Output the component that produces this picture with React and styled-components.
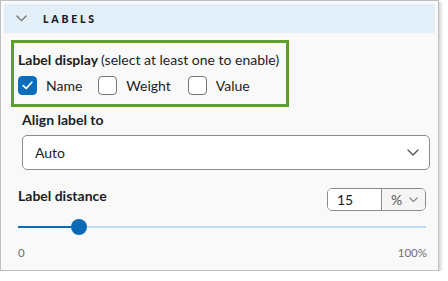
import React from "react";
import styled, { createGlobalStyle } from "styled-components";

const Global = createGlobalStyle`
  html, body { margin: 0; padding: 0; background: #ffffff; }
  body { font-family: Lato, "Open Sans", sans-serif; color: #1d1d1f; }
  * { box-sizing: border-box; }
`;

const Panel = styled.div`
  width: 439px;
  height: 271px;
  background: #f9f9f9;
  border: 1px solid #bfbfbf;
  box-shadow: 2px 2px 3px rgba(0, 0, 0, 0.18);
  padding: 3px;
  display: flex;
  flex-direction: column;
`;

const Header = styled.div`
  height: 29px;
  background: #e2eff8;
  display: flex;
  align-items: center;
  padding-left: 12px;
  gap: 16px;
`;

const HeaderTitle = styled.span`
  font-size: 10.5px;
  font-weight: 900;
  letter-spacing: 2.8px;
  color: #131c28;
`;

const Body = styled.div`
  display: flex;
  flex-direction: column;
  padding: 7px 8px 0 7px;
`;

const GreenBox = styled.div`
  width: 278px;
  height: 67px;
  border: 3px solid #5e9e2c;
  padding: 8px 0 0 4px;
  display: flex;
  flex-direction: column;
`;

const Label = styled.div`
  font-size: 14px;
  font-weight: 700;
  color: #1d1d1f;
  line-height: 17px;
`;

const Note = styled.span`
  font-weight: 400;
`;

const CheckRow = styled.div`
  display: flex;
  align-items: center;
  margin-top: 8px;
`;

const CheckItem = styled.label`
  display: flex;
  align-items: center;
  gap: 9px;
  font-size: 14px;
  color: #1d1d1f;
  margin-right: ${(p) => p.$gap}px;
`;

const Box = styled.span`
  width: 19px;
  height: 19px;
  border-radius: 4px;
  border: 1px solid ${(p) => (p.$checked ? "#0a6ebd" : "#757575")};
  background: ${(p) => (p.$checked ? "#0a6ebd" : "#ffffff")};
  display: flex;
  align-items: center;
  justify-content: center;
`;

const AlignSection = styled.div`
  display: flex;
  flex-direction: column;
  margin-left: 11px;
  margin-top: 4px;
`;

const Select = styled.div`
  margin-top: 7px;
  height: 35px;
  width: 408px;
  border: 1px solid #8c8c8c;
  border-radius: 5px;
  background: #ffffff;
  display: flex;
  align-items: center;
  justify-content: space-between;
  padding: 0 10px 0 12px;
  font-size: 14px;
  color: #1d1d1f;
`;

const DistanceHeader = styled.div`
  display: flex;
  align-items: flex-start;
  justify-content: space-between;
  margin-top: 17px;
  padding-left: 7px;
  width: 415px;
`;

const NumberBox = styled.div`
  width: 99px;
  height: 23px;
  border: 1px solid #8c8c8c;
  border-radius: 5px;
  display: flex;
  overflow: hidden;
  margin-top: 1px;
`;

const NumberValue = styled.div`
  width: 54px;
  background: #ffffff;
  border-right: 1px solid #8c8c8c;
  display: flex;
  align-items: center;
  padding-left: 9px;
  font-size: 14px;
  color: #1d1d1f;
`;

const UnitSelect = styled.div`
  flex: 1;
  background: #f5f5f5;
  display: flex;
  align-items: center;
  padding-left: 9px;
  gap: 7px;
  font-size: 14px;
  color: #555;
`;

const SliderWrap = styled.div`
  position: relative;
  margin-left: 7px;
  width: 408px;
  height: 16px;
  margin-top: 8px;
`;

const Track = styled.div`
  position: absolute;
  left: 0;
  right: 0;
  top: 7px;
  height: 2px;
  background: #bcdcf0;
`;

const Fill = styled.div`
  position: absolute;
  left: 0;
  top: 7px;
  height: 2px;
  background: #0a6ab6;
`;

const Thumb = styled.div`
  position: absolute;
  top: 0;
  width: 16px;
  height: 16px;
  margin-left: -8px;
  border-radius: 50%;
  background: #0a6ab6;
`;

const Scale = styled.div`
  display: flex;
  justify-content: space-between;
  margin-left: 7px;
  width: 409px;
  margin-top: 11px;
  font-size: 11.5px;
  color: #707070;
`;

const Chevron = ({ size = 12, color = "#6b6b6b" }) => (
  <svg width={size} height={size * 0.6} viewBox="0 0 12 7" fill="none">
    <path d="M1 1l5 5 5-5" stroke={color} strokeWidth="1.4" strokeLinecap="round" strokeLinejoin="round" />
  </svg>
);

const Check = ({ checked }) => (
  <Box $checked={checked}>
    {checked && (
      <svg width="11" height="9" viewBox="0 0 11 9" fill="none">
        <path d="M1.2 4.6l3 2.9 5.6-6.3" stroke="#fff" strokeWidth="1.7" strokeLinecap="round" strokeLinejoin="round" />
      </svg>
    )}
  </Box>
);

export default function App() {
  const pct = 15;
  return (
    <>
      <Global />
      <Panel>
        <Header>
          <Chevron size={11} color="#6a6f76" />
          <HeaderTitle>LABELS</HeaderTitle>
        </Header>
        <Body>
          <GreenBox>
            <Label>
              Label display <Note>(select at least one to enable)</Note>
            </Label>
            <CheckRow>
              <CheckItem $gap={16}>
                <Check checked />
                Name
              </CheckItem>
              <CheckItem $gap={17}>
                <Check />
                Weight
              </CheckItem>
              <CheckItem $gap={0}>
                <Check />
                Value
              </CheckItem>
            </CheckRow>
          </GreenBox>
          <AlignSection>
            <Label>Align label to</Label>
            <Select>
              <span>Auto</span>
              <Chevron size={12} color="#555" />
            </Select>
          </AlignSection>
          <DistanceHeader>
            <Label>Label distance</Label>
            <NumberBox>
              <NumberValue>15</NumberValue>
              <UnitSelect>
                %
                <Chevron size={9} color="#777" />
              </UnitSelect>
            </NumberBox>
          </DistanceHeader>
          <SliderWrap>
            <Track />
            <Fill style={{ width: `${pct}%` }} />
            <Thumb style={{ left: `${pct}%` }} />
          </SliderWrap>
          <Scale>
            <span>0</span>
            <span>100%</span>
          </Scale>
        </Body>
      </Panel>
    </>
  );
}
